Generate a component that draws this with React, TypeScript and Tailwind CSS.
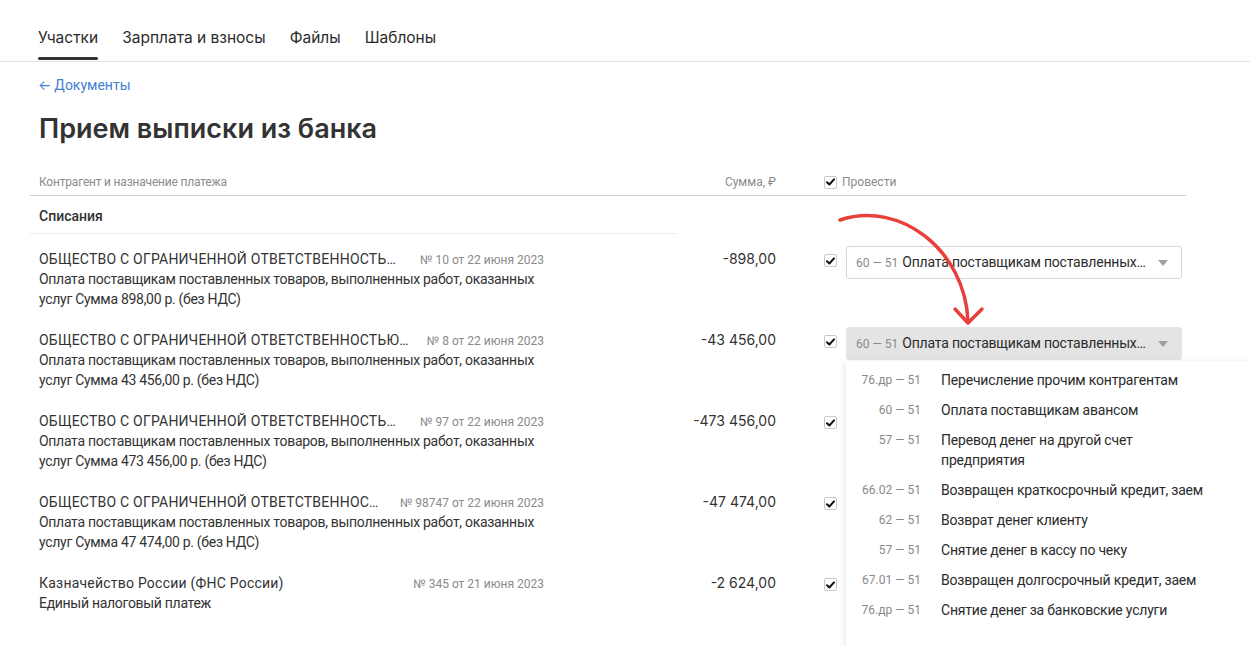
import React from "react";

const font = { fontFamily: "Roboto, 'Noto Sans', sans-serif" };
const inter = { fontFamily: "Inter, 'Noto Sans', sans-serif" };

function Check() {
  return (
    <div className="w-[13px] h-[13px] rounded-[2px] border border-[#c8c8c8] bg-white flex items-center justify-center shrink-0">
      <svg width="9" height="8" viewBox="0 0 9 8">
        <path d="M1 4.2 L3.4 6.5 L8 1.4" fill="none" stroke="#111" strokeWidth="2" strokeLinecap="round" strokeLinejoin="round" />
      </svg>
    </div>
  );
}

function Select({ active }: { active?: boolean }) {
  return (
    <div
      className={
        "w-[336px] h-[33px] rounded-[3px] flex items-center pl-[9px] pr-[13px] " +
        (active ? "bg-[#e4e4e4] border border-[#e4e4e4]" : "bg-white border border-[#d6d6d6]")
      }
    >
      <span className="text-[12px] text-[#8a8a8a] whitespace-nowrap">60 — 51</span>
      <span className="ml-[4px] text-[14px] text-[#2b2b2b] whitespace-nowrap flex-1 tracking-[-0.2px]">Оплата поставщикам поставленных…</span>
      <svg width="10" height="6" viewBox="0 0 10 6" className="ml-2 shrink-0">
        <path d="M0 0 L10 0 L5 6 Z" fill="#a0a0a0" />
      </svg>
    </div>
  );
}

type Row = { title: string; doc: string; lines: string[]; amount: string; select: boolean; active?: boolean };

const rows: Row[] = [
  {
    title: "ОБЩЕСТВО С ОГРАНИЧЕННОЙ ОТВЕТСТВЕННОСТЬ…",
    doc: "№ 10 от 22 июня 2023",
    lines: ["Оплата поставщикам поставленных товаров, выполненных работ, оказанных", "услуг Сумма 898,00 р. (без НДС)"],
    amount: "-898,00",
    select: true,
  },
  {
    title: "ОБЩЕСТВО С ОГРАНИЧЕННОЙ ОТВЕТСТВЕННОСТЬЮ…",
    doc: "№ 8 от 22 июня 2023",
    lines: ["Оплата поставщикам поставленных товаров, выполненных работ, оказанных", "услуг Сумма 43 456,00 р. (без НДС)"],
    amount: "-43 456,00",
    select: true,
    active: true,
  },
  {
    title: "ОБЩЕСТВО С ОГРАНИЧЕННОЙ ОТВЕТСТВЕННОСТЬ…",
    doc: "№ 97 от 22 июня 2023",
    lines: ["Оплата поставщикам поставленных товаров, выполненных работ, оказанных", "услуг Сумма 473 456,00 р. (без НДС)"],
    amount: "-473 456,00",
    select: false,
  },
  {
    title: "ОБЩЕСТВО С ОГРАНИЧЕННОЙ ОТВЕТСТВЕННОС…",
    doc: "№ 98747 от 22 июня 2023",
    lines: ["Оплата поставщикам поставленных товаров, выполненных работ, оказанных", "услуг Сумма 47 474,00 р. (без НДС)"],
    amount: "-47 474,00",
    select: false,
  },
  {
    title: "Казначейство России (ФНС России)",
    doc: "№ 345 от 21 июня 2023",
    lines: ["Единый налоговый платеж"],
    amount: "-2 624,00",
    select: false,
  },
];

const options: [string, string][] = [
  ["76.др — 51", "Перечисление прочим контрагентам"],
  ["60 — 51", "Оплата поставщикам авансом"],
  ["57 — 51", "Перевод денег на другой счет предприятия"],
  ["66.02 — 51", "Возвращен краткосрочный кредит, заем"],
  ["62 — 51", "Возврат денег клиенту"],
  ["57 — 51", "Снятие денег в кассу по чеку"],
  ["67.01 — 51", "Возвращен долгосрочный кредит, заем"],
  ["76.др — 51", "Снятие денег за банковские услуги"],
];

export default function App() {
  return (
    <div className="relative w-[1250px] h-[646px] overflow-hidden bg-white text-[#333]" style={font}>
      {/* Tabs */}
      <div className="h-[62px] border-b border-[#e3e3e3] flex items-end pl-[38px] gap-[24px]" style={inter}>
        {["Участки", "Зарплата и взносы", "Файлы", "Шаблоны"].map((t, i) => (
          <div key={t} className="relative h-full flex items-start pt-[27px]">
            <span className="text-[15.5px] leading-[22px] text-[#2b2b2b] whitespace-nowrap">{t}</span>
            {i === 0 && <div className="absolute left-0 right-0 bottom-[1px] h-[3px] rounded-[2px] bg-[#333]" />}
          </div>
        ))}
      </div>

      <div className="pl-[30px] w-[1186px]">
        <div className="pl-[8px] pt-[13px] text-[14px] leading-[20px] text-[#3f7fd4] flex items-center">
          <span className="mr-[3px]" style={inter}>←</span>
          <span>Документы</span>
        </div>
        <h1 className="pl-[9px] mt-[17px] text-[27px] leading-[34px] font-semibold text-[#333]" style={inter}>
          Прием выписки из банка
        </h1>

        {/* Header */}
        <div className="mt-[29px] h-[21px] border-b border-[#cfcfcf] flex items-start pl-[9px] text-[12px] leading-[14px] text-[#8c8c8c]">
          <div className="w-[505px] tracking-[-0.2px]">Контрагент и назначение платежа</div>
          <div className="w-[232px] text-right">Сумма, ₽</div>
          <div className="ml-[48px] flex items-center gap-[5px]">
            <Check />
            <span>Провести</span>
          </div>
        </div>

        {/* Section */}
        <div className="w-[646px] h-[38px] border-b border-[#ececec] pl-[9px] pt-[11px] text-[14px] leading-[18px] font-medium text-[#333]">Списания</div>

        <div className="pt-[15px]">
          {rows.map((r, i) => (
            <div key={i} className="flex items-start pl-[9px] pb-[21px]">
              <div className="w-[505px]">
                <div className="flex items-baseline justify-between h-[20px]">
                  <span className="text-[14px] leading-[20px] text-[#333] whitespace-nowrap tracking-[0.22px]">{r.title}</span>
                  <span className="text-[12px] leading-[20px] text-[#8a8a8a] whitespace-nowrap ml-3">{r.doc}</span>
                </div>
                {r.lines.map((l) => (
                  <div key={l} className="text-[14px] leading-[20px] text-[#333] whitespace-nowrap tracking-[-0.3px]">{l}</div>
                ))}
              </div>
              <div className="w-[232px] text-right text-[14px] leading-[20px] text-[#333]" style={inter}>{r.amount}</div>
              <div className="ml-[48px] pt-[5px]">
                <Check />
              </div>
              {r.select && (
                <div className="ml-[9px] mt-[-3px]">
                  <Select active={r.active} />
                </div>
              )}
            </div>
          ))}
        </div>
      </div>

      {/* Dropdown menu */}
      <div className="absolute left-[846px] top-[361px] w-[430px] h-[300px] bg-white shadow-[0_2px_8px_rgba(0,0,0,0.12)] pt-[4px]">
        {options.map(([code, label], i) => (
          <div key={i} className="flex items-start py-[5px]">
            <div className="w-[75px] text-right text-[12px] leading-[20px] text-[#8a8a8a] whitespace-nowrap">{code}</div>
            <div className="ml-[20px] w-[270px] text-[14px] leading-[20px] text-[#2b2b2b] tracking-[-0.2px]">{label}</div>
          </div>
        ))}
      </div>

      {/* Annotation arrow */}
      <svg className="absolute left-0 top-0 pointer-events-none" width="1250" height="646">
        <path d="M 840 220 C 900 200, 965 250, 968 321" fill="none" stroke="#e8403a" strokeWidth="3.5" strokeLinecap="round" />
        <path d="M 955 309 L 968 323 L 982 309" fill="none" stroke="#e8403a" strokeWidth="3.5" strokeLinecap="round" strokeLinejoin="round" />
      </svg>
    </div>
  );
}
